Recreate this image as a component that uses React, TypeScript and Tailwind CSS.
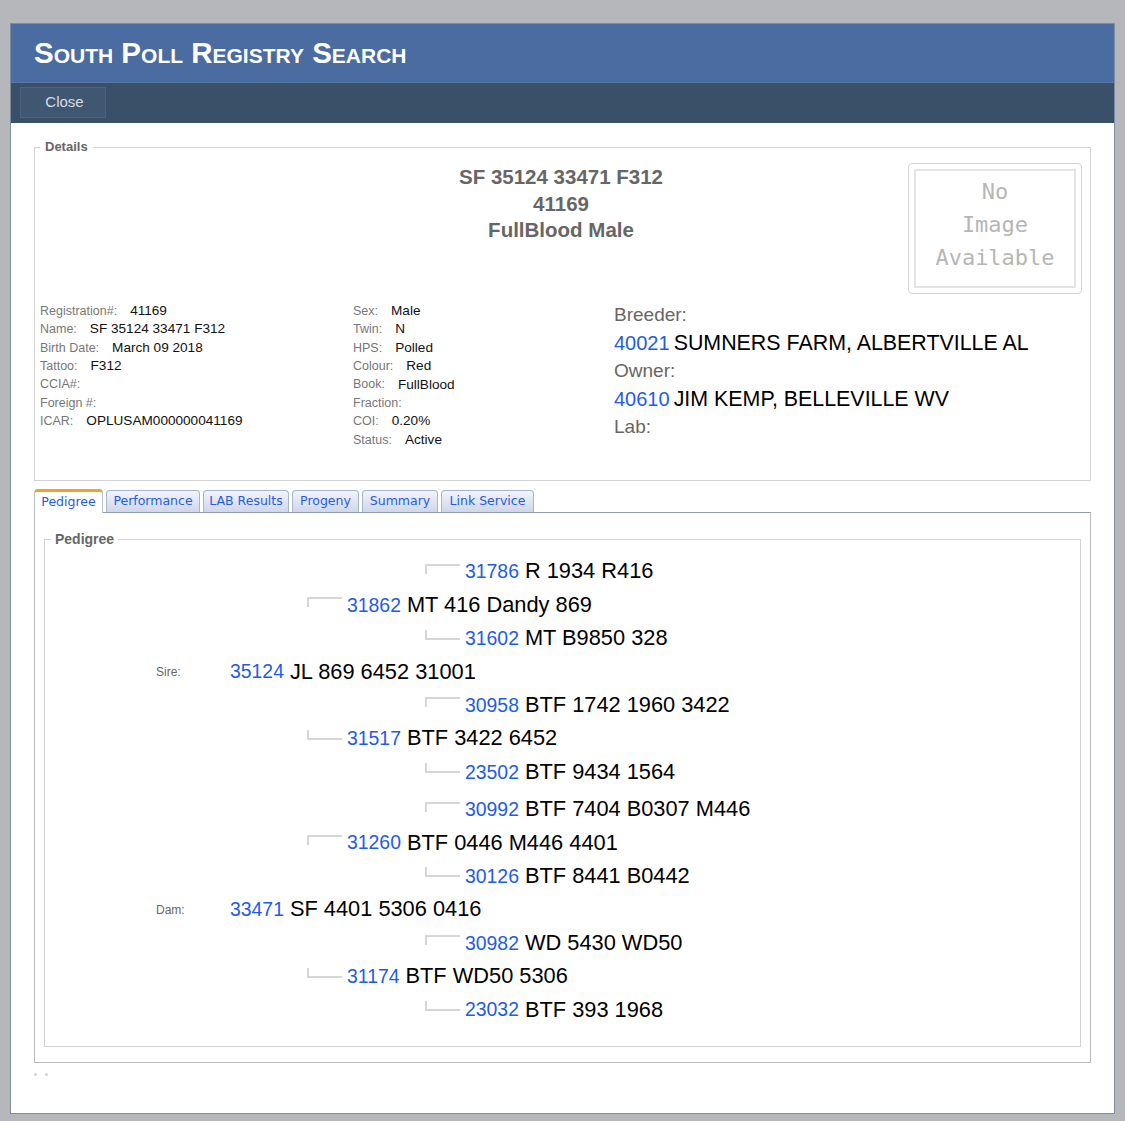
import React from "react";

const SANS = "font-['Liberation_Sans',Arial,sans-serif]";

const LEFT_INFO = [
  ["Registration#:", "41169"],
  ["Name:", "SF 35124 33471 F312"],
  ["Birth Date:", "March 09 2018"],
  ["Tattoo:", "F312"],
  ["CCIA#:", ""],
  ["Foreign #:", ""],
  ["ICAR:", "OPLUSAM000000041169"],
];

const MID_INFO = [
  ["Sex:", "Male"],
  ["Twin:", "N"],
  ["HPS:", "Polled"],
  ["Colour:", "Red"],
  ["Book:", "FullBlood"],
  ["Fraction:", ""],
  ["COI:", "0.20%"],
  ["Status:", "Active"],
];

const TABS = [
  { label: "Pedigree", w: "w-[69px]" },
  { label: "Performance", w: "w-[94px]" },
  { label: "LAB Results", w: "w-[86px]" },
  { label: "Progeny", w: "w-[67px]" },
  { label: "Summary", w: "w-[76px]" },
  { label: "Link Service", w: "w-[93px]" },
];

type Row = { gen: 1 | 2 | 3; pos?: "top" | "bot"; label?: string; id: string; name: string; gap?: boolean };

const PEDIGREE: Row[] = [
  { gen: 3, pos: "top", id: "31786", name: "R 1934 R416" },
  { gen: 2, pos: "top", id: "31862", name: "MT 416 Dandy 869" },
  { gen: 3, pos: "bot", id: "31602", name: "MT B9850 328" },
  { gen: 1, label: "Sire:", id: "35124", name: "JL 869 6452 31001" },
  { gen: 3, pos: "top", id: "30958", name: "BTF 1742 1960 3422" },
  { gen: 2, pos: "bot", id: "31517", name: "BTF 3422 6452" },
  { gen: 3, pos: "bot", id: "23502", name: "BTF 9434 1564" },
  { gen: 3, pos: "top", id: "30992", name: "BTF 7404 B0307 M446", gap: true },
  { gen: 2, pos: "top", id: "31260", name: "BTF 0446 M446 4401" },
  { gen: 3, pos: "bot", id: "30126", name: "BTF 8441 B0442" },
  { gen: 1, label: "Dam:", id: "33471", name: "SF 4401 5306 0416" },
  { gen: 3, pos: "top", id: "30982", name: "WD 5430 WD50" },
  { gen: 2, pos: "bot", id: "31174", name: "BTF WD50 5306" },
  { gen: 3, pos: "bot", id: "23032", name: "BTF 393 1968" },
];

function InfoList({ items }: { items: string[][] }) {
  return (
    <div className="flex flex-col">
      {items.map(([label, value]) => (
        <div key={label} className="h-[18.4px] flex items-center">
          <span className="text-[12.5px] text-[#777] mr-[13px]">{label}</span>
          <span className="text-[13.6px] text-[#111]">{value}</span>
        </div>
      ))}
    </div>
  );
}

function PedigreeRow({ row }: { row: Row }) {
  const indent = row.gen === 1 ? "w-[105px]" : row.gen === 2 ? "w-[256px]" : "w-[374px]";
  return (
    <div className={`flex h-[33.4px] items-center ${row.gap ? "mt-[4px]" : ""}`}>
      <div className={`shrink-0 ${indent}`} />
      {row.gen === 1 ? (
        <span className="w-[74px] shrink-0 text-[12px] text-[#666]">{row.label}</span>
      ) : row.pos === "top" ? (
        <div className="w-[35px] h-[10px] mr-[5px] mb-[6px] shrink-0 border-t-2 border-l-2 border-[#d6d6d6]" />
      ) : (
        <div className="w-[35px] h-[10px] mr-[5px] mb-[8px] shrink-0 border-b-2 border-l-2 border-[#d6d6d6]" />
      )}
      <span className="text-[19.4px] text-[#1f5ce6]">{row.id}</span>
      <span className="text-[21.8px] text-black ml-[6px]">{row.name}</span>
    </div>
  );
}

export default function App() {
  return (
    <div className={`min-h-screen bg-[#b6b7bb] pt-[23px] pb-[8px] ${SANS}`}>
      <div className="ml-[10px] w-[1105px] border border-[#7b8ca3] bg-white">
        {/* header */}
        <div className="h-[59px] bg-[#4a6ca0] border-b border-[#5877a6] flex items-center pl-[23px]">
          <h1 className="text-[29.5px] font-bold text-white [font-variant:small-caps] leading-none">
            South Poll Registry Search
          </h1>
        </div>
        {/* toolbar */}
        <div className="h-[40px] bg-[#3a5068] pl-[9px] pt-[4px]">
          <button className="w-[86px] h-[31px] bg-[#3f5771] border border-[#4c637d] text-[15px] text-[#d6dde6] pl-[3px]">
            Close
          </button>
        </div>

        {/* body */}
        <div className="px-[23px] pt-[16px] h-[990px]">
          <fieldset className="border border-[#d2d2d2] pl-[5px] pr-[8px] pt-[8px] pb-[31px]">
            <legend className="px-[5px] text-[13px] font-bold text-[#666] leading-4">Details</legend>

            <div className="grid grid-cols-[1fr_auto_1fr] items-start">
              <div />
              <div className="pt-[1px] text-center text-[20.5px] font-bold text-[#666] leading-[26.5px]">
                <div>SF 35124 33471 F312</div>
                <div>41169</div>
                <div>FullBlood Male</div>
              </div>
              <div className="justify-self-end w-[174px] h-[131px] rounded-[4px] border border-[#d4d4d4] p-[5px]">
                <div className="h-full border-2 border-[#e4e4e4] flex flex-col items-center pt-[4px] font-['DejaVu_Sans_Mono',monospace] text-[22px] leading-[33px] text-[#b6b6b6]">
                  <span>No</span>
                  <span>Image</span>
                  <span>Available</span>
                </div>
              </div>
            </div>

            <div className="flex mt-[8px]">
              <div className="w-[313px]">
                <InfoList items={LEFT_INFO} />
              </div>
              <div className="w-[261px]">
                <InfoList items={MID_INFO} />
              </div>
              <div className="flex flex-col -mt-[1px]">
                <div className="h-[28px] flex items-center text-[19px] text-[#666]">Breeder:</div>
                <div className="h-[28px] flex items-center">
                  <span className="text-[20px] text-[#1f5ce6] mr-[4px]">40021</span>
                  <span className="text-[21.4px] text-black">SUMNERS FARM, ALBERTVILLE AL</span>
                </div>
                <div className="h-[28px] flex items-center text-[19px] text-[#666]">Owner:</div>
                <div className="h-[28px] flex items-center">
                  <span className="text-[20px] text-[#1f5ce6] mr-[4px]">40610</span>
                  <span className="text-[21.4px] text-black">JIM KEMP, BELLEVILLE WV</span>
                </div>
                <div className="h-[28px] flex items-center text-[19px] text-[#666]">Lab:</div>
              </div>
            </div>
          </fieldset>

          {/* tabs */}
          <div className="mt-[8px] flex items-end gap-[3px] font-['DejaVu_Sans',Verdana,sans-serif] text-[12.5px]">
            {TABS.map((t, i) =>
              i === 0 ? (
                <div
                  key={t.label}
                  className={`${t.w} h-[24px] -mb-px relative z-10 bg-white rounded-t-[4px] border border-b-0 border-[#b8c2d0] border-t-[3px] border-t-[#f0a32c] flex items-center justify-center text-[#1f5ce6]`}
                >
                  {t.label}
                </div>
              ) : (
                <div
                  key={t.label}
                  className={`${t.w} h-[22px] rounded-t-[4px] border border-b-0 border-[#a9b5c8] bg-gradient-to-b from-[#f3f5fb] to-[#cfd6ea] flex items-center justify-center text-[#1f5ce6]`}
                >
                  {t.label}
                </div>
              )
            )}
          </div>
          <div className="border border-[#b9b9b9] border-t-[#8e9cae] px-[9px] pt-[18px] pb-[15px]">
            <fieldset className="border border-[#d2d2d2] pl-[6px] pt-[8px] pb-[19px]">
              <legend className="px-[4px] text-[14px] font-bold text-[#666] leading-4">Pedigree</legend>
              {PEDIGREE.map((r) => (
                <PedigreeRow key={r.id} row={r} />
              ))}
            </fieldset>
          </div>
          <div className="flex gap-[8px] mt-[10px]">
            <span className="w-[3px] h-[3px] rounded-full bg-[#d4d4d4]" />
            <span className="w-[3px] h-[3px] rounded-full bg-[#d4d4d4]" />
          </div>
        </div>
      </div>
    </div>
  );
}
